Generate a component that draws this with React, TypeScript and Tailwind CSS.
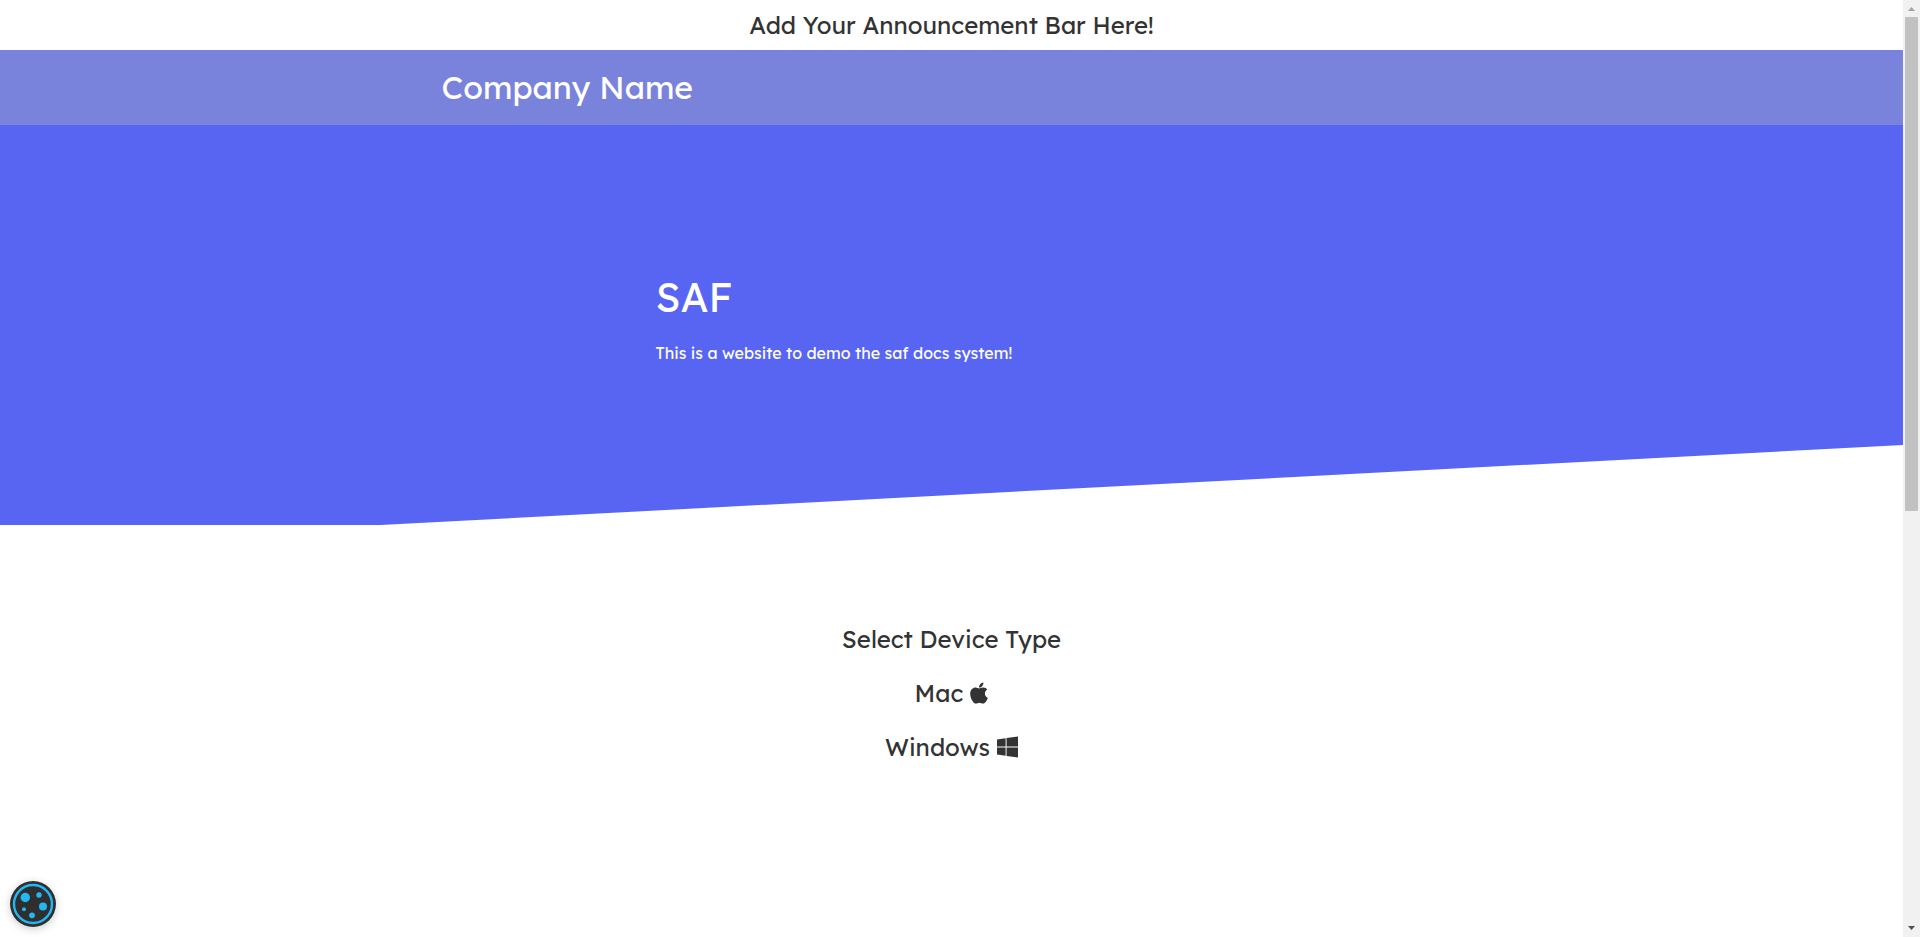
import React from 'react';
import { FaApple, FaWindows } from 'react-icons/fa';

const CookieButton: React.FC = () => (
  <button
    type="button"
    aria-label="Cookie settings"
    className="fixed bottom-[10px] left-[10px] h-[46px] w-[46px] rounded-full shadow-[0_2px_8px_rgba(0,0,0,0.2)]"
  >
    <svg viewBox="0 0 46 46" className="h-full w-full">
      <circle cx="23" cy="23" r="23" fill="#2f2f2f" />
      <circle cx="23" cy="23" r="19" fill="none" stroke="#23b7f4" strokeWidth="2.4" />
      <g fill="#23b7f4">
        <circle cx="15.3" cy="16.5" r="4.7" />
        <circle cx="29" cy="14" r="2.7" />
        <circle cx="33" cy="25.5" r="4" />
        <circle cx="14" cy="28.3" r="2" />
        <circle cx="22" cy="34.3" r="2.9" />
      </g>
    </svg>
  </button>
);

const ScrollTrack: React.FC = () => (
  <div
    aria-hidden="true"
    className="flex w-[17px] shrink-0 flex-col items-center justify-between bg-[#f1f1f1]"
  >
    <svg viewBox="0 0 17 17" className="h-[17px] w-[17px] shrink-0">
      <path d="M5 11h7L8.500 7z" fill="#a3a3a3" />
    </svg>
    <div className="flex w-full flex-1 flex-col items-center">
      <div className="h-[54.7%] w-[13px] bg-[#c1c1c1]" />
    </div>
    <svg viewBox="0 0 17 17" className="h-[17px] w-[17px] shrink-0">
      <path d="M5 6h7L8.500 10z" fill="#505050" />
    </svg>
  </div>
);

const App: React.FC = () => {
  return (
    <div className="flex min-h-screen bg-white font-['Lexend','Inter',sans-serif] text-[#333333]">
      <div className="min-w-0 flex-1">
        {/* Announcement bar */}
        <div className="py-[10px] text-center text-2xl leading-[30px]">
          Add Your Announcement Bar Here!
        </div>

        {/* Header */}
        <header className="bg-[#7983db] py-4 text-white">
          <div className="mx-auto max-w-[1020px]">
            <a href="#" className="block text-[32px] leading-[43px]">
              Company Name
            </a>
          </div>
        </header>

        {/* Hero */}
        <section className="flex h-[400px] items-center bg-[#5865f2] pb-4 text-white [clip-path:polygon(0_0,100%_0,100%_80%,20%_100%,0_100%)]">
          <div className="mx-auto w-full max-w-[592px]">
            <h1 className="text-[40px] leading-[50px]">SAF</h1>
            <p className="mt-[21px] text-base leading-5">
              This is a website to demo the saf docs system!
            </p>
          </div>
        </section>

        {/* Device picker */}
        <main className="mt-[99px] flex flex-col items-center gap-6 text-2xl leading-[30px]">
          <h2>Select Device Type</h2>
          <a href="#mac" className="flex items-center gap-[7px]">
            Mac <FaApple className="h-[24px] w-[18px]" />
          </a>
          <a href="#windows" className="flex items-center gap-[7px]">
            Windows <FaWindows className="h-[24px] w-[21px]" />
          </a>
        </main>

        <CookieButton />
      </div>
      <ScrollTrack />
    </div>
  );
};

export default App;
